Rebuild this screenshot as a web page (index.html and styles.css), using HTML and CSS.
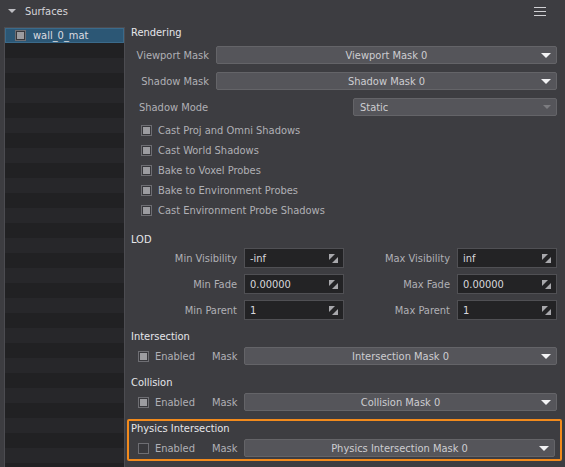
FILE: index.html
```html
<!DOCTYPE html>
<html lang="en">
<head>
    <meta charset="UTF-8">
    <title>Surfaces</title>
    <link rel="stylesheet" href="styles.css">
</head>
<body>
    <header class="painel-topo">
        <span class="seta"></span>
        <span class="titulo">Surfaces</span>
        <span class="menu">
            <i></i><i></i><i></i>
        </span>
    </header>

    <div class="conteudo">
        <!-- lista de superfícies -->
        <div class="lista">
            <div class="item selecionado"><span class="check marcado"></span>wall_0_mat</div>
            <div class="item"></div>
            <div class="item"></div>
            <div class="item"></div>
            <div class="item"></div>
            <div class="item"></div>
            <div class="item"></div>
            <div class="item"></div>
            <div class="item"></div>
            <div class="item"></div>
            <div class="item"></div>
            <div class="item"></div>
            <div class="item"></div>
            <div class="item"></div>
            <div class="item"></div>
            <div class="item"></div>
            <div class="item"></div>
            <div class="item"></div>
            <div class="item"></div>
            <div class="item"></div>
            <div class="item"></div>
            <div class="item"></div>
            <div class="item"></div>
            <div class="item"></div>
            <div class="item"></div>
            <div class="item"></div>
            <div class="item"></div>
            <div class="item"></div>
            <div class="item"></div>
            <div class="item"></div>
        </div>

        <!-- propriedades -->
        <div class="props">
            <div class="secao-titulo">Rendering</div>
            <div class="linha-mask primeira">
                <span class="rotulo">Viewport Mask</span>
                <div class="combo">Viewport Mask 0<span class="arrow"></span></div>
            </div>
            <div class="linha-mask">
                <span class="rotulo">Shadow Mask</span>
                <div class="combo">Shadow Mask 0<span class="arrow"></span></div>
            </div>
            <div class="linha-modo">
                <span class="rotulo-esq">Shadow Mode</span>
                <div class="combo desativado">Static<span class="arrow"></span></div>
            </div>

            <div class="checks">
                <label class="linha-check"><span class="check marcado"></span>Cast Proj and Omni Shadows</label>
                <label class="linha-check"><span class="check marcado"></span>Cast World Shadows</label>
                <label class="linha-check"><span class="check marcado"></span>Bake to Voxel Probes</label>
                <label class="linha-check"><span class="check marcado"></span>Bake to Environment Probes</label>
                <label class="linha-check"><span class="check marcado"></span>Cast Environment Probe Shadows</label>
            </div>

            <div class="secao-titulo lod">LOD</div>
            <div class="grade-lod" id="grade-lod">
                <!-- preenchida pelo script -->
            </div>

            <div class="secao-titulo inter">Intersection</div>
            <div class="linha-enabled">
                <span class="check marcado"></span><span class="txt-enabled">Enabled</span>
                <span class="txt-mask">Mask</span>
                <div class="combo">Intersection Mask 0<span class="arrow"></span></div>
            </div>

            <div class="secao-titulo colisao">Collision</div>
            <div class="linha-enabled">
                <span class="check marcado"></span><span class="txt-enabled">Enabled</span>
                <span class="txt-mask">Mask</span>
                <div class="combo">Collision Mask 0<span class="arrow"></span></div>
            </div>

            <div class="destaque">
                <div class="secao-titulo">Physics Intersection</div>
                <div class="linha-enabled">
                    <span class="check"></span><span class="txt-enabled">Enabled</span>
                    <span class="txt-mask">Mask</span>
                    <div class="combo">Physics Intersection Mask 0<span class="arrow"></span></div>
                </div>
            </div>
        </div>
    </div>

    <script>
        const camposLod = [
            ["Min Visibility", "-inf", "Max Visibility", "inf"],
            ["Min Fade", "0.00000", "Max Fade", "0.00000"],
            ["Min Parent", "1", "Max Parent", "1"]
        ];

        const icone = '<svg class="icone" width="9" height="9" viewBox="0 0 9 9">' +
            '<polygon points="0,0 6,0 0,6" fill="#a8a8ac"/>' +
            '<polygon points="9,3 9,9 3,9" fill="#a8a8ac"/></svg>';

        const grade = document.getElementById("grade-lod");
        camposLod.forEach(linha => {
            for (let i = 0; i < 4; i += 2) {
                const rotulo = document.createElement("span");
                rotulo.className = "rotulo";
                rotulo.textContent = linha[i];
                grade.appendChild(rotulo);

                const campo = document.createElement("div");
                campo.className = "campo";
                campo.innerHTML = `<span>${linha[i + 1]}</span>${icone}`;
                grade.appendChild(campo);
            }
        });
    </script>
</body>
</html>
```

FILE: styles.css
```css
body {
    margin: 0;
    background-color: #3d3d41;
    font-family: "DejaVu Sans Condensed", "Liberation Sans", sans-serif;
    font-size: 11px;
    color: #b0b0b5;
    overflow: hidden;
}

.painel-topo {
    height: 22px;
    display: flex;
    align-items: center;
    padding-left: 8px;
}

.seta {
    width: 0;
    height: 0;
    border-left: 4px solid transparent;
    border-right: 4px solid transparent;
    border-top: 4px solid #bdbdc2;
    margin-right: 9px;
}

.titulo {
    color: #d6d6da;
}

.menu {
    margin-left: auto;
    margin-right: 19px;
    display: flex;
    flex-direction: column;
    gap: 3px;
}

.menu i {
    display: block;
    width: 12px;
    height: 1px;
    background-color: #d0d0d4;
}

.conteudo {
    display: flex;
    padding-top: 4px;
}

/* lista da esquerda */
.lista {
    width: 119px;
    height: 440px;
    margin: 1px 0 0 4px;
    border: 1px solid #4c4c51;
    background-color: #27272a;
}

.item {
    height: 15px;
    display: flex;
    align-items: center;
    padding-left: 10px;
    color: #dcdce0;
}

.item:nth-child(even) {
    background-color: #212123;
}

.item.selecionado {
    background-color: #2c5775;
    box-shadow: inset 0 0 0 1px #3b6a8a;
}

.item .check {
    margin-right: 7px;
}

/* painel de propriedades */
.props {
    width: 426px;
    margin-left: 6px;
}

.secao-titulo {
    height: 14px;
    line-height: 14px;
    color: #e6e6ea;
}

.rotulo {
    text-align: right;
    white-space: nowrap;
}

.linha-mask {
    display: grid;
    grid-template-columns: 78px 1fr;
    column-gap: 7px;
    align-items: center;
    margin-top: 8px;
}

.linha-mask.primeira {
    margin-top: 6px;
}

.linha-modo {
    display: flex;
    align-items: center;
    margin-top: 8px;
}

.rotulo-esq {
    padding-left: 8px;
}

.linha-modo .combo {
    margin-left: auto;
    width: 204px;
    justify-content: flex-start;
    padding-left: 6px;
}

.combo {
    position: relative;
    height: 18px;
    box-sizing: border-box;
    display: flex;
    align-items: center;
    justify-content: center;
    background-color: #55555a;
    border: 1px solid #646468;
    border-radius: 2px;
    color: #cdcdd1;
}

.arrow {
    position: absolute;
    right: 5px;
    top: 6px;
    width: 0;
    height: 0;
    border-left: 5px solid transparent;
    border-right: 5px solid transparent;
    border-top: 5px solid #f2f2f4;
}

.combo.desativado .arrow {
    border-top-color: #7c7c80;
    border-left-width: 4px;
    border-right-width: 4px;
    border-top-width: 4px;
}

.checks {
    margin-top: 4px;
}

.linha-check {
    height: 20px;
    display: flex;
    align-items: center;
    padding-left: 10px;
}

.check {
    width: 11px;
    height: 11px;
    box-sizing: border-box;
    border: 1px solid #6e6e73;
    background-color: #38383c;
    margin-right: 6px;
    position: relative;
    flex-shrink: 0;
}

.check.marcado::after {
    content: "";
    position: absolute;
    left: 1px;
    top: 1px;
    width: 7px;
    height: 7px;
    background-color: #9c9ca0;
}

.secao-titulo.lod {
    margin-top: 13px;
}

.grade-lod {
    display: grid;
    grid-template-columns: 106px 100px 99px 100px;
    column-gap: 7px;
    row-gap: 6px;
    align-items: center;
    margin-top: 1px;
}

.campo {
    height: 20px;
    box-sizing: border-box;
    display: flex;
    align-items: center;
    justify-content: space-between;
    padding: 0 5px;
    background-color: #232325;
    border: 1px solid #505054;
    color: #d8d8dc;
}

.secao-titulo.inter {
    margin-top: 10px;
}

.secao-titulo.colisao {
    margin-top: 11px;
}

.linha-enabled {
    display: flex;
    align-items: center;
    margin-top: 3px;
    padding-left: 7px;
}

.txt-enabled {
    width: 57px;
}

.txt-mask {
    width: 32px;
}

.linha-enabled .combo {
    flex: 1;
}

.destaque {
    margin: 8px -5px 0 -4px;
    border: 2px solid #f28a1c;
    border-radius: 2px;
    padding: 1px 5px 2px 2px;
}
```
